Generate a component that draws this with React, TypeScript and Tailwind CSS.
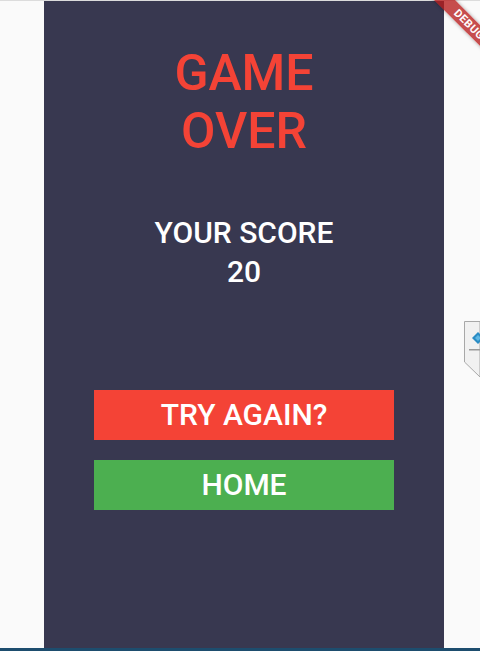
const font = { fontFamily: "Roboto, 'Noto Sans', sans-serif" }

function DebugBanner() {
  return (
    <div className="absolute top-0 right-0 w-[80px] h-[80px] overflow-hidden pointer-events-none">
      <div className="absolute left-[9px] top-[17px] w-[120px] h-[15px] rotate-45 bg-[#b71c1c]/[0.78] shadow-[0_0_4px_rgba(0,0,0,0.35)] flex items-center justify-center">
        <span className="text-white text-[11px] font-bold leading-none tracking-[0.5px]" style={font}>DEBUG</span>
      </div>
    </div>
  )
}

function InspectorTab() {
  return (
    <svg className="absolute left-[463px] top-[320px]" width="17" height="60" viewBox="0 0 17 60">
      <path d="M1.5 1.5 H17 V57 L1.5 42 Z" fill="#f1f1f1" stroke="#a8a8a8" strokeWidth="1" />
      <path d="M9 18 L15 12 L17 14 V22 L15 24 Z" fill="#2a8cc4" />
      <path d="M12 18 L15 15 L17 17 V19 L15 21 Z" fill="#5fb7e4" />
      <rect x="6" y="29" width="11" height="1.5" fill="#9a9a9a" />
    </svg>
  )
}

function Button({ label, color }: { label: string, color: string }) {
  return (
    <button className={`w-[300px] h-[50px] flex items-center justify-center text-white text-[30px] font-medium leading-none ${color}`} style={font}>
      {label}
    </button>
  )
}

export default function App() {
  return (
    <div className="relative w-[480px] h-[651px] bg-[#fafafa] flex flex-col overflow-hidden" style={font}>
      <div className="h-px bg-[#dcdcdc]" />
      <div className="flex-1 flex justify-center pr-[36px] pl-[44px]">
        <main className="w-[400px] bg-[#383850] flex flex-col items-center">
          <h1 className="mt-[43px] text-[#f44336] text-[50px] font-medium leading-[58px] text-center">
            GAME<br />OVER
          </h1>
          <p className="mt-[53px] text-white text-[30px] font-medium leading-[39px] text-center">
            YOUR SCORE<br />20
          </p>
          <div className="mt-[99px] flex flex-col gap-5">
            <Button label="TRY AGAIN?" color="bg-[#f44336]" />
            <Button label="HOME" color="bg-[#4caf50]" />
          </div>
        </main>
      </div>
      <div className="h-[3px] bg-[#1d4d6e]" />
      <DebugBanner />
      <InspectorTab />
    </div>
  )
}
